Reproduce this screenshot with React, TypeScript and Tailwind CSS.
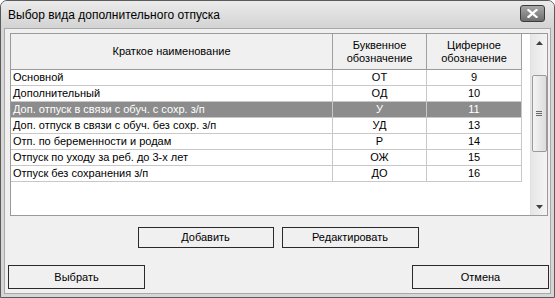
import React from "react";

const rows = [
  ["Основной", "ОТ", "9"],
  ["Дополнительный", "ОД", "10"],
  ["Доп. отпуск в связи с обуч. с сохр. з/п", "У", "11"],
  ["Доп. отпуск в связи с обуч. без сохр. з/п", "УД", "13"],
  ["Отп. по беременности и родам", "Р", "14"],
  ["Отпуск по уходу за реб. до 3-х лет", "ОЖ", "15"],
  ["Отпуск без сохранения з/п", "ДО", "16"],
];

function Btn({ label, w, h }: { label: string; w: string; h: string }) {
  return (
    <div
      className={`${w} ${h} border border-[#2a2a2a] bg-[#f0f0f0] flex items-center justify-center text-[11px] text-black`}
    >
      {label}
    </div>
  );
}

export default function App() {
  return (
    <div
      className="w-[555px] h-[298px] bg-[#d6d6d6] border border-[#5a5a5a] rounded-t-[7px] flex flex-col overflow-hidden"
      style={{ fontFamily: '"Liberation Sans", Arial, sans-serif' }}
    >
      {/* Title bar */}
      <div className="h-[27px] shrink-0 flex items-center justify-between pl-[7px] pr-[9px] bg-gradient-to-b from-[#ebebeb] to-[#d3d3d3]">
        <span className="text-[12px] text-black leading-none">Выбор вида дополнительного отпуска</span>
        <div className="w-[25px] h-[17px] mb-[3px] rounded-[3px] border border-[#3c3c3c] bg-gradient-to-b from-[#a8a8a8] to-[#6e6e6e] flex items-center justify-center">
          <svg width="11" height="9" viewBox="0 0 11 9">
            <path d="M1.5 1 L9.5 8 M9.5 1 L1.5 8" stroke="#fff" strokeWidth="2.2" strokeLinecap="square" />
          </svg>
        </div>
      </div>

      {/* Client */}
      <div className="flex-1 mx-[3px] mb-[3px] bg-[#f0f0f0] border border-[#a8a8a8] flex flex-col">
        {/* Grid */}
        <div className="mt-[4px] ml-[5px] mr-[2px] h-[183px] border border-[#9a9a9a] bg-white flex">
          <div className="flex flex-col">
            <div className="flex h-[36px] bg-[#f0f0f0] border-b border-[#9a9a9a] text-[11px] text-black leading-[13px]">
              <div className="w-[322px] border-r border-[#a0a0a0] flex items-center justify-center">
                Краткое наименование
              </div>
              <div className="w-[94px] border-r border-[#a0a0a0] flex items-center justify-center text-center">
                Буквенное
                <br />
                обозначение
              </div>
              <div className="w-[95px] border-r border-[#a0a0a0] flex items-center justify-center text-center">
                Циферное
                <br />
                обозначение
              </div>
            </div>
            {rows.map((r, i) => {
              const sel = i === 2;
              return (
                <div
                  key={i}
                  className={`flex h-[16px] border-b border-[#c8c8c8] text-[11px] leading-[15px] ${
                    sel ? "bg-[#8c8c8c] text-white" : "text-black"
                  }`}
                >
                  <div className="w-[322px] border-r border-[#c8c8c8] pl-[2px] whitespace-nowrap">{r[0]}</div>
                  <div className="w-[94px] border-r border-[#c8c8c8] text-center">{r[1]}</div>
                  <div className="w-[95px] border-r border-[#c8c8c8] text-center">{r[2]}</div>
                </div>
              );
            })}
          </div>
          <div className="flex-1" />
          {/* Scrollbar */}
          <div className="w-[17px] bg-gradient-to-r from-[#e6e6e6] to-[#f4f4f4] border-l border-[#e0e0e0] flex flex-col items-center">
            <div className="h-[17px] w-full flex items-center justify-center">
              <svg width="7" height="4" viewBox="0 0 7 4">
                <path d="M3.5 0 L7 4 L0 4 Z" fill="#404040" />
              </svg>
            </div>
            <div className="mt-[24px] w-[15px] h-[77px] rounded-[2px] border border-[#9a9a9a] bg-gradient-to-r from-[#f4f4f4] to-[#dcdcdc] flex flex-col items-center justify-center gap-[1px]">
              <div className="w-[6px] h-[1px] bg-[#6a6a6a]" />
              <div className="w-[6px] h-[1px] bg-[#6a6a6a]" />
              <div className="w-[6px] h-[1px] bg-[#6a6a6a]" />
            </div>
            <div className="flex-1" />
            <div className="h-[17px] w-full flex items-center justify-center">
              <svg width="7" height="4" viewBox="0 0 7 4">
                <path d="M0 0 L7 0 L3.5 4 Z" fill="#404040" />
              </svg>
            </div>
          </div>
        </div>

        {/* Middle buttons */}
        <div className="mt-[11px] flex justify-center gap-[8px] pl-[1px]">
          <Btn label="Добавить" w="w-[136px]" h="h-[21px]" />
          <Btn label="Редактировать" w="w-[137px]" h="h-[21px]" />
        </div>

        {/* Bottom buttons */}
        <div className="mt-[17px] flex justify-between pl-[3px] pr-[1px]">
          <Btn label="Выбрать" w="w-[137px]" h="h-[24px]" />
          <Btn label="Отмена" w="w-[137px]" h="h-[24px]" />
        </div>
      </div>
    </div>
  );
}
